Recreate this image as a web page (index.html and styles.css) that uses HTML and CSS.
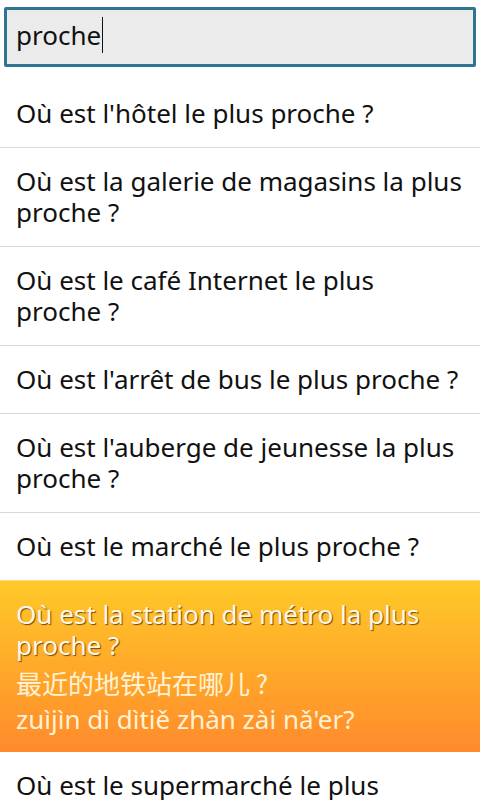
FILE: index.html
```html
<!DOCTYPE html>
<html lang="fr">
<head>
<meta charset="UTF-8">
<title>Recherche</title>
<link rel="stylesheet" href="styles.css">
</head>
<body>
	<div class="search">
		<div class="search-box">proche<span class="caret"></span></div>
	</div>
	<ul class="phrases">
		<li class="row">Où est l'hôtel le plus proche ?</li>
		<li class="row">Où est la galerie de magasins la plus proche ?</li>
		<li class="row">Où est le café Internet le plus proche ?</li>
		<li class="row">Où est l'arrêt de bus le plus proche ?</li>
		<li class="row">Où est l'auberge de jeunesse la plus proche ?</li>
		<li class="row">Où est le marché le plus proche ?</li>
		<li class="row selected">
			<div class="fr">Où est la station de métro la plus proche ?</div>
			<div class="zh">最近的地铁站在哪儿 ?</div>
			<div class="py">zuìjìn dì dìtiě zhàn zài nǎ'er?</div>
		</li>
		<li class="row">Où est le supermarché le plus proche ?</li>
	</ul>
</body>
</html>
```

FILE: styles.css
```css
body{
	margin:0;
	background:#fff;
	font-family:"Noto Sans","Open Sans","Noto Sans CJK SC",sans-serif;
	color:#111;
	width:480px;
	height:800px;
	overflow:hidden;
}
.search{
	padding:7px 4px 13px 4px;
}
.search-box{
	height:54px;
	border:3px solid #2d7592;
	border-radius:2px;
	background:#ebebeb;
	font-size:26px;
	line-height:50px;
	padding-left:9px;
	color:#111;
}
.caret{
	display:inline-block;
	width:1px;
	height:36px;
	background:#111;
	vertical-align:-8px;
	margin-left:1px;
}
.phrases{
	list-style:none;
	margin:0;
	padding:0;
}
.row{
	font-size:26px;
	line-height:31px;
	padding:18px 16px 18px 16px;
	border-bottom:1px solid #d9d9d9;
}
.selected{
	background:linear-gradient(#ffc928,#ff8a2c);
	border-top:1px solid #f7d88a;
	margin-top:-1px;
	border-bottom:none;
	padding-bottom:15px;
	color:#fff8e6;
	text-shadow:1px 1px 1px #6b4a10;
}
.selected .zh{
	font-family:"Noto Sans CJK SC",sans-serif;
	line-height:36px;
	padding-top:4px;
	text-shadow:none;
	color:#fff2d4;
}
.selected .py{
	line-height:36px;
	text-shadow:none;
	color:#fff2d4;
}
```
